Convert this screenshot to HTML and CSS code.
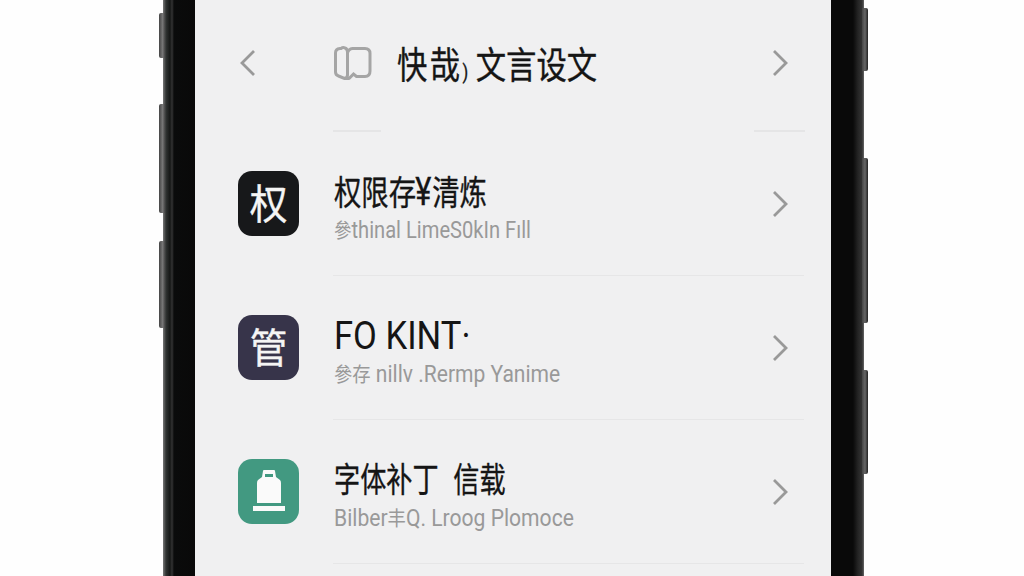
FILE: index.html
```html
<!DOCTYPE html>
<html lang="zh-CN">
  <head>
    <meta charset="UTF-8" />
    <meta name="viewport" content="width=device-width, initial-scale=1.0" />
    <title>快哉</title>
    <link rel="stylesheet" href="styles.css">
  </head>
  <body>
    <div class="phone">
      <!-- side buttons -->
      <span class="key key-mute"></span>
      <span class="key key-up"></span>
      <span class="key key-down"></span>
      <span class="key key-right-top"></span>
      <span class="key key-right-mid"></span>
      <span class="key key-right-low"></span>

      <main class="screen">
        <header class="header">
          <svg class="chevron back" viewBox="0 0 16 28"><path d="M14 2 2 14l12 12" /></svg>
          <svg class="book" viewBox="0 0 38 34">
            <path d="M6 2.500h1q2-1.500 4-.5 2.500 1 2.500 4v23q0 3-3 3.500l-6-2.500q-3-1-3-4V7q0-4 4.500-4.500z" />
            <path d="M13.500 7q1-4 5-4.500H31q5 0 5 5V25q0 5.500-5 5.500h-8.500L19.500 28l-4 4q-2 1.500-5 .5" />
          </svg>
          <h1 class="title"><span class="wide">快哉</span><span class="mark">)</span>文言设文</h1>
          <svg class="chevron" viewBox="0 0 16 28"><path d="m2 2 12 12L2 26" /></svg>
        </header>

        <ul class="list">
          <li class="row">
            <div class="icon icon-black"><span>权</span></div>
            <div class="text">
              <h2 class="name name-rights">权限存<span class="yen">¥</span>清炼</h2>
              <p class="desc desc-rights"><span class="han">參</span>thinal LimeS0kIn Fıll</p>
            </div>
            <svg class="chevron" viewBox="0 0 16 28"><path d="m2 2 12 12L2 26" /></svg>
          </li>
          <li class="row">
            <div class="icon icon-purple"><span>管</span></div>
            <div class="text">
              <h2 class="name name-latin">FO KINT·</h2>
              <p class="desc desc-manage"><span class="han">參存</span> nillv .Rermp Yanime</p>
            </div>
            <svg class="chevron" viewBox="0 0 16 28"><path d="m2 2 12 12L2 26" /></svg>
          </li>
          <li class="row">
            <div class="icon icon-green">
              <svg class="bottle" viewBox="0 0 34 42">
                <path fill-rule="evenodd" d="M12 0h10q1 0 1 1l1 6 4 3q1 1 1 3v20H5V13q0-2 1-3l4-3 1-6q0-1 1-1zM13 4v3h8V4z" />
                <path d="M1 36h32v5H1z" />
              </svg>
            </div>
            <div class="text">
              <h2 class="name name-font">字体补丁<span class="second">信载</span></h2>
              <p class="desc desc-font">Bilber<span class="han">丰</span>Q. Lroog Plomoce</p>
            </div>
            <svg class="chevron" viewBox="0 0 16 28"><path d="m2 2 12 12L2 26" /></svg>
          </li>
        </ul>
      </main>
    </div>
  </body>
</html>
```
FILE: styles.css
```css
* {
  box-sizing: border-box;
}

body {
  margin: 0;
  height: 576px;
  overflow: hidden;
  background: #fefefe;
  font-family: Roboto, "Noto Sans CJK SC", sans-serif;
}

.phone {
  position: relative;
  width: 701px;
  height: 576px;
  margin-left: 163px;
  padding: 0 33px 0 32px;
  background: linear-gradient(to right, #777 0, #303332 3px, #151716 7px, #333 9px, #0a0b0b 11px, #090909 32px, #090909 690px, #242424 695px, #333 699px, #666 701px);
}

.key {
  position: absolute;
  left: -4px;
  width: 6px;
  border-radius: 2px 0 0 2px;
  background: linear-gradient(to right, #444, #777 60%, #444);
}

.key-mute {
  top: 13px;
  height: 45px;
}

.key-up {
  top: 104px;
  height: 109px;
}

.key-down {
  top: 241px;
  height: 87px;
}

.key-right-top,
.key-right-mid,
.key-right-low {
  left: 699px;
  border-radius: 0 2px 2px 0;
  background: linear-gradient(to right, #444, #666 50%, #222);
}

.key-right-top {
  top: 8px;
  height: 63px;
}

.key-right-mid {
  top: 158px;
  height: 165px;
}

.key-right-low {
  top: 370px;
  height: 104px;
}

.screen {
  height: 576px;
  padding: 0 26px 0 43px;
  background: #f0f0f1;
}

.header {
  display: flex;
  align-items: center;
  height: 132px;
  padding: 0 17px 6px 0;
  background:
    linear-gradient(#e5e5e6, #e5e5e6) 95px 100% / 48px 2px no-repeat,
    linear-gradient(#e5e5e6, #e5e5e6) 100% 100% / 51px 2px no-repeat;
}

.chevron {
  flex: none;
  width: 16px;
  height: 28px;
  margin-left: auto;
  fill: none;
  stroke: #999;
  stroke-width: 2.8;
}

.back {
  margin: 0 78px 0 2px;
}

.book {
  width: 38px;
  height: 34px;
  margin-right: 25px;
  fill: none;
  stroke: #a5a5a5;
  stroke-width: 3;
}

.title,
.name,
.desc {
  margin: 0;
  font-weight: 400;
  white-space: nowrap;
  transform-origin: left center;
}

.title,
.name {
  color: #151515;
  -webkit-text-stroke: 0.35px #151515;
}

.title {
  width: 240px;
  padding-top: 12px;
  font-size: 37px;
  line-height: 52px;
  transform: scaleX(0.82);
}

.wide {
  letter-spacing: 3px;
}

.mark {
  display: inline-block;
  width: 16px;
  font-size: 20px;
}

.list {
  margin: 0;
  padding: 0;
  list-style: none;
}

.row {
  display: flex;
  align-items: center;
  height: 144px;
  padding-right: 17px;
  background: linear-gradient(#e6e6e7, #e6e6e7) 95px 100% / 471px 1px no-repeat;
}

.icon {
  display: flex;
  align-items: center;
  justify-content: center;
  width: 61px;
  height: 65px;
  margin: 0 35px 2px 0;
  border-radius: 14px;
  color: #f5f5f5;
  font-size: 41px;
  line-height: 1;
  -webkit-text-stroke: 0.4px #f5f5f5;
}

.icon span {
  padding-top: 4px;
  transform: scaleX(0.92);
}

.icon-black {
  background: #17181a;
}

.icon-purple {
  background: #37344a;
}

.icon-green {
  background: #429981;
}

.bottle {
  width: 34px;
  height: 42px;
  fill: #fafafa;
}

.text {
  width: 260px;
  padding-top: 12px;
}

.name {
  height: 42px;
  font-size: 34px;
  line-height: 40px;
}

.name-rights {
  transform: scaleX(0.805);
}

.yen {
  display: inline-block;
  width: 20px;
  font-size: 38px;
  text-indent: -1px;
}

.name-latin {
  font-size: 38px;
  transform: scaleX(0.91);
  -webkit-text-stroke: 0;
}

.name-font {
  transform: scaleX(0.77);
}

.second {
  margin-left: 19px;
}

.desc {
  height: 34px;
  color: #999;
  font-size: 23px;
  line-height: 34px;
}

.han {
  font-size: 20px;
}

.desc-rights {
  transform: scaleX(0.875);
}

.desc-manage {
  transform: scaleX(0.915);
}

.desc-font {
  transform: scaleX(0.917);
}
```
